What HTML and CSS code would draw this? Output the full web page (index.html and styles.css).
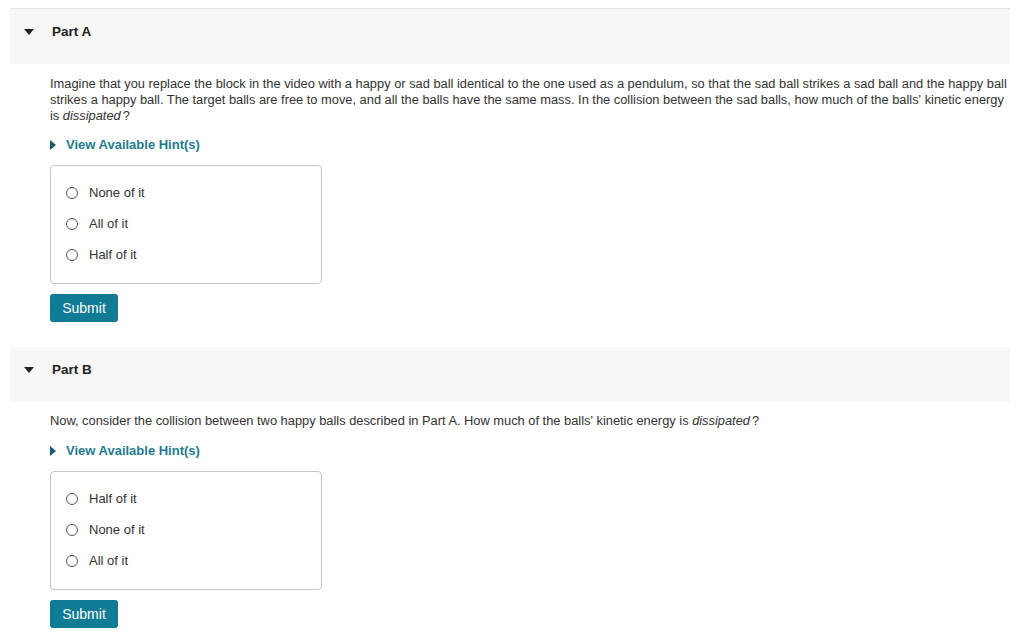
FILE: index.html
```html
<!DOCTYPE html>
<html>
<head>
<meta charset="utf-8">
<link rel="stylesheet" href="styles.css">
</head>
<body>
<div class="page">
  <section class="part">
    <div class="part-head"><span class="caret"></span><span class="part-title">Part A</span></div>
    <div class="part-body">
      <p class="question">Imagine that you replace the block in the video with a happy or sad ball identical to the one used as a pendulum, so that the sad ball strikes a sad ball and the happy ball strikes a happy ball. The target balls are free to move, and all the balls have the same mass. In the collision between the sad balls, how much of the balls' kinetic energy is <em>dissipated</em>?</p>
      <div class="hint"><span class="hint-arrow"></span>View Available Hint(s)</div>
      <div class="choices">
        <label class="choice"><span class="radio"></span>None of it</label>
        <label class="choice"><span class="radio"></span>All of it</label>
        <label class="choice"><span class="radio"></span>Half of it</label>
      </div>
      <button class="submit">Submit</button>
    </div>
  </section>
  <section class="part part-b">
    <div class="part-head"><span class="caret"></span><span class="part-title">Part B</span></div>
    <div class="part-body">
      <p class="question">Now, consider the collision between two happy balls described in Part A. How much of the balls' kinetic energy is <em>dissipated</em>?</p>
      <div class="hint"><span class="hint-arrow"></span>View Available Hint(s)</div>
      <div class="choices">
        <label class="choice"><span class="radio"></span>Half of it</label>
        <label class="choice"><span class="radio"></span>None of it</label>
        <label class="choice"><span class="radio"></span>All of it</label>
      </div>
      <button class="submit">Submit</button>
    </div>
  </section>
</div>
</body>
</html>
```
FILE: styles.css
```css
html, body {
  margin: 0;
  padding: 0;
  background: #fff;
}
body {
  font-family: "Liberation Sans", Arial, sans-serif;
  font-size: 13px;
  color: #333;
}
.page {
  margin: 8px 14px 0 10px;
  border-top: 1px solid #e4e4e4;
}
.part-b {
  margin-top: 25px;
}
.part-head {
  height: 55px;
  box-sizing: border-box;
  background: #f7f7f7;
  display: flex;
  align-items: center;
  padding: 0 0 10px 14px;
}
.caret {
  width: 0;
  height: 0;
  border-left: 5px solid transparent;
  border-right: 5px solid transparent;
  border-top: 6px solid #222;
  margin-right: 18px;
  margin-top: 1px;
}
.part-title {
  font-weight: bold;
  font-size: 13.5px;
  line-height: 16px;
  color: #222;
}
.part-body {
  padding-left: 40px;
}
.question {
  margin: 12px 0 0 0;
  line-height: 16px;
  font-size: 12.85px;
}
.question em {
  padding-right: 2px;
}
.part-b .question {
  margin-top: 11px;
}
.hint {
  margin-top: 13px;
  line-height: 16px;
  display: flex;
  align-items: center;
  color: #1f7b8f;
  font-weight: bold;
}
.part-b .hint {
  margin-top: 14px;
}
.hint-arrow {
  width: 0;
  height: 0;
  border-top: 5px solid transparent;
  border-bottom: 5px solid transparent;
  border-left: 6px solid #1a5a6e;
  margin-right: 10px;
}
.choices {
  box-sizing: border-box;
  margin-top: 12px;
  width: 272px;
  border: 1px solid #c6c6c6;
  border-radius: 4px;
  padding: 11px 0 13px 15px;
}
.choice {
  display: flex;
  align-items: center;
  height: 31px;
  color: #333;
}
.radio {
  width: 10px;
  height: 10px;
  border: 1px solid #555;
  border-radius: 50%;
  background: #fff;
  margin-right: 11px;
}
.submit {
  display: block;
  margin-top: 10px;
  width: 68px;
  height: 28px;
  border: none;
  border-radius: 3px;
  background: #0f7b95;
  color: #fff;
  font-family: "Liberation Sans", Arial, sans-serif;
  font-size: 14px;
  padding: 0;
}
```
